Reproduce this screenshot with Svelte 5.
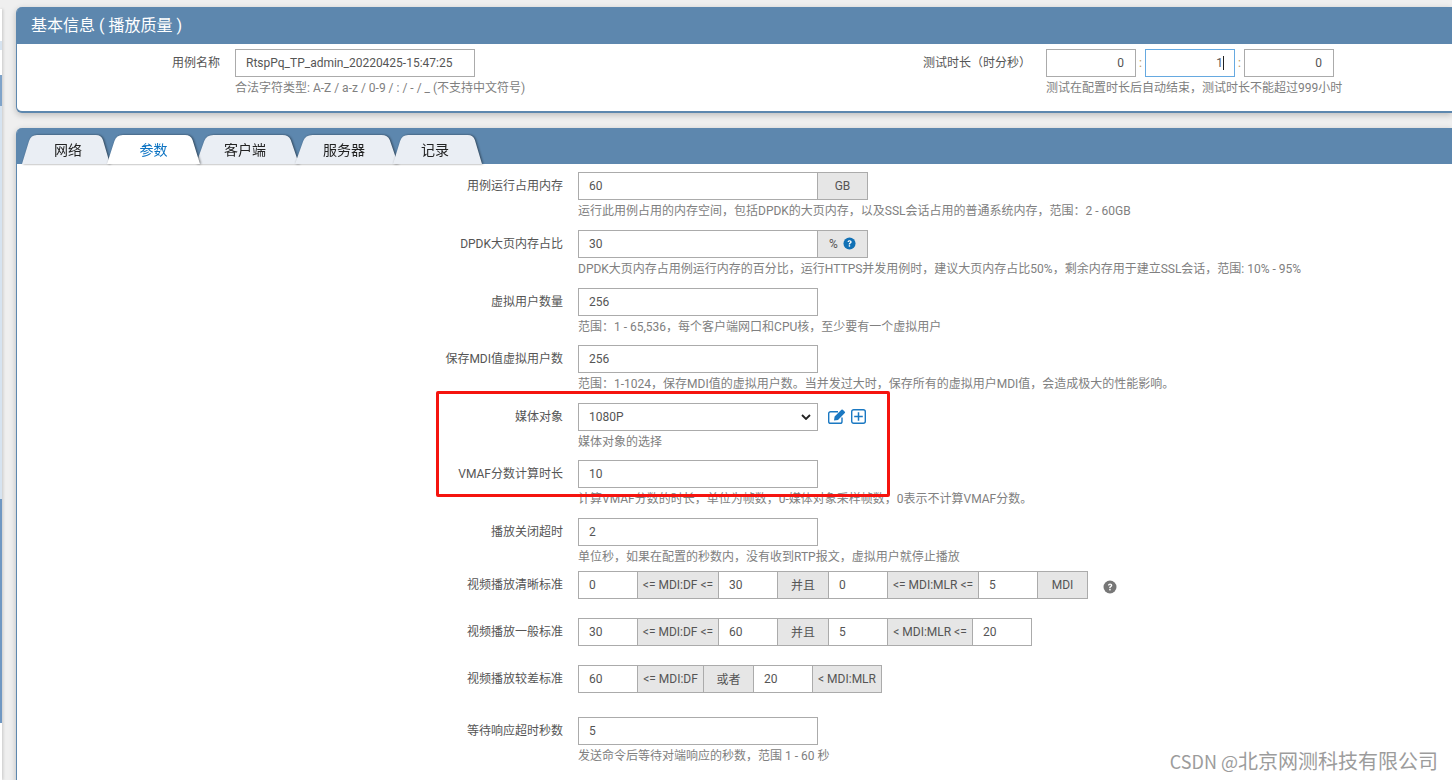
<script>
	const tabs = ['网络', '参数', '客户端', '服务器', '记录'];
	const active = '参数';
</script>

<div class="page">
	<div class="edge"></div>

	<section class="panel basic">
		<h2 class="panel-title">基本信息 ( 播放质量 )</h2>
		<div class="basic-body">
			<div class="basic-col name-col">
				<span class="basic-label">用例名称</span>
				<div>
					<input class="input main" value="RtspPq_TP_admin_20220425-15:47:25" />
					<p class="help">合法字符类型: A-Z / a-z / 0-9 / : / - / _ (不支持中文符号)</p>
				</div>
			</div>
			<div class="basic-col time-col">
				<span class="basic-label">测试时长（时分秒）</span>
				<div>
					<div class="time-inputs">
						<input class="input time" value="0" />
						<span class="colon">:</span>
						<div class="time-focus">
							<input class="input time focus" value="1" />
							<span class="caret"></span>
						</div>
						<span class="colon">:</span>
						<input class="input time" value="0" />
					</div>
					<p class="help">测试在配置时长后自动结束，测试时长不能超过999小时</p>
				</div>
			</div>
		</div>
	</section>

	<section class="panel params">
		<div class="tabbar">
			{#each tabs as tab}
				<div class="tab" class:active={tab === active}>
					<svg class="tab-shape" viewBox="0 0 100 29" preserveAspectRatio="none">
						<path d="M0 29 L8 6 Q10 0 17 0 L84 0 Q90 0 92 5 L100 29 Z" />
					</svg>
					<span class="tab-text">{tab}</span>
				</div>
			{/each}
		</div>

		<div class="form">
			<div class="row">
				<span class="label">用例运行占用内存</span>
				<div>
					<div class="group">
						<input class="input main" value="60" />
						<span class="addon unit">GB</span>
					</div>
					<p class="help">运行此用例占用的内存空间，包括DPDK的大页内存，以及SSL会话占用的普通系统内存，范围：2 - 60GB</p>
				</div>
			</div>

			<div class="row">
				<span class="label">DPDK大页内存占比</span>
				<div>
					<div class="group">
						<input class="input main" value="30" />
						<span class="addon unit">%
							<svg viewBox="0 0 14 14" width="13" height="13">
								<circle cx="7" cy="7" r="6.5" fill="#1271b5" />
								<path d="M4.9 5.4C5 4.1 5.9 3.4 7.1 3.4c1.3 0 2.2.8 2.2 1.9 0 .9-.5 1.3-1.1 1.7-.5.3-.6.5-.6 1H6.2c0-.9.2-1.3.9-1.8.5-.3.7-.5.7-.8 0-.4-.3-.7-.7-.7-.5 0-.7.3-.8.8z" fill="#fff" />
								<rect x="6.2" y="8.8" width="1.5" height="1.6" fill="#fff" />
							</svg>
						</span>
					</div>
					<p class="help">DPDK大页内存占用例运行内存的百分比，运行HTTPS并发用例时，建议大页内存占比50%，剩余内存用于建立SSL会话，范围: 10% - 95%</p>
				</div>
			</div>

			<div class="row">
				<span class="label">虚拟用户数量</span>
				<div>
					<input class="input main" value="256" />
					<p class="help">范围：1 - 65,536，每个客户端网口和CPU核，至少要有一个虚拟用户</p>
				</div>
			</div>

			<div class="row">
				<span class="label">保存MDI值虚拟用户数</span>
				<div>
					<input class="input main" value="256" />
					<p class="help">范围：1-1024，保存MDI值的虚拟用户数。当并发过大时，保存所有的虚拟用户MDI值，会造成极大的性能影响。</p>
				</div>
			</div>

			<div class="row">
				<span class="label">媒体对象</span>
				<div>
					<div class="group">
						<div class="select">
							<span>1080P</span>
							<svg viewBox="0 0 10 6" width="10" height="6" fill="none">
								<path d="M1 1l4 4 4-4" stroke="#222" stroke-width="1.8" />
							</svg>
						</div>
						<svg class="edit" viewBox="0 0 19 15" width="19" height="15" fill="none">
							<path d="M14 8.5V12.4A1.9 1.9 0 0 1 12.1 14.3H2.6A1.9 1.9 0 0 1 .7 12.4V4.6A1.9 1.9 0 0 1 2.6 2.7H10" stroke="#1a78c2" stroke-width="1.4" />
							<path d="M6.6 7.6 13.4.8a1 1 0 0 1 1.4 0l2 1.9a1 1 0 0 1 0 1.4L10 10.9l-4 .7z" fill="#1a78c2" />
						</svg>
						<svg class="plus" viewBox="0 0 15 15" width="15" height="15" fill="none">
							<rect x="0.7" y="0.7" width="13.6" height="13.6" rx="2" stroke="#1a78c2" stroke-width="1.4" />
							<path d="M7.5 3.2v8.6M3.2 7.5h8.6" stroke="#1a78c2" stroke-width="1.5" />
						</svg>
					</div>
					<p class="help">媒体对象的选择</p>
				</div>
			</div>

			<div class="row">
				<span class="label">VMAF分数计算时长</span>
				<div>
					<input class="input main" value="10" />
					<p class="help">计算VMAF分数的时长，单位为帧数，0-媒体对象采样帧数，0表示不计算VMAF分数。</p>
				</div>
			</div>

			<div class="row short">
				<span class="label">播放关闭超时</span>
				<div>
					<input class="input main" value="2" />
					<p class="help">单位秒，如果在配置的秒数内，没有收到RTP报文，虚拟用户就停止播放</p>
				</div>
			</div>

			<div class="row combo">
				<span class="label">视频播放清晰标准</span>
				<div class="group">
					<input class="input cell" value="0" />
					<span class="addon w82">&lt;= MDI:DF &lt;=</span>
					<input class="input cell" value="30" />
					<span class="addon w52">并且</span>
					<input class="input cell" value="0" />
					<span class="addon w92">&lt;= MDI:MLR &lt;=</span>
					<input class="input cell" value="5" />
					<span class="addon w51">MDI</span>
					<svg class="help-grey" viewBox="0 0 14 14" width="14" height="14">
						<circle cx="7" cy="7" r="6.5" fill="#777" />
						<path d="M4.9 5.4C5 4.1 5.9 3.4 7.1 3.4c1.3 0 2.2.8 2.2 1.9 0 .9-.5 1.3-1.1 1.7-.5.3-.6.5-.6 1H6.2c0-.9.2-1.3.9-1.8.5-.3.7-.5.7-.8 0-.4-.3-.7-.7-.7-.5 0-.7.3-.8.8z" fill="#fff" />
						<rect x="6.2" y="8.8" width="1.5" height="1.6" fill="#fff" />
					</svg>
				</div>
			</div>

			<div class="row combo">
				<span class="label">视频播放一般标准</span>
				<div class="group">
					<input class="input cell" value="30" />
					<span class="addon w82">&lt;= MDI:DF &lt;=</span>
					<input class="input cell" value="60" />
					<span class="addon w52">并且</span>
					<input class="input cell" value="5" />
					<span class="addon w86">&lt; MDI:MLR &lt;=</span>
					<input class="input cell" value="20" />
				</div>
			</div>

			<div class="row wide">
				<span class="label">视频播放较差标准</span>
				<div class="group">
					<input class="input cell" value="60" />
					<span class="addon w67">&lt;= MDI:DF</span>
					<span class="addon w51">或者</span>
					<input class="input cell" value="20" />
					<span class="addon w70">&lt; MDI:MLR</span>
				</div>
			</div>

			<div class="row">
				<span class="label">等待响应超时秒数</span>
				<div>
					<input class="input main" value="5" />
					<p class="help">发送命令后等待对端响应的秒数，范围 1 - 60 秒</p>
				</div>
			</div>
		</div>
	</section>

	<div class="highlight"></div>
	<div class="watermark"><span class="wm-latin">CSDN @</span>北京网测科技有限公司</div>
</div>

<style>
	:global(body) {
		background: #efefef;
		overflow: hidden;
	}

	.page {
		position: relative;
		height: 780px;
		overflow: hidden;
		padding: 7px 0 0 16px;
		box-sizing: border-box;
		font-family: Roboto, "Noto Sans CJK SC", sans-serif;
		font-size: 12px;
		color: #555;
	}

	/* sliver of the page's sidebar left of the panels */
	.edge {
		position: absolute;
		left: 0;
		top: 9px;
		width: 2px;
		height: 771px;
		background: linear-gradient(#fff 0 32px, #d6e3f0 32px 41px, #fff 41px 66px, #7fa3c9 66px 97px, #d6e3f0 97px 490px, #6f97c2 490px 714px, #fff 714px);
		box-shadow: 1px 0 3px rgba(0, 0, 0, 0.2);
	}

	.panel {
		background: #fff;
		border-left: 1px solid #5d87ae;
		box-shadow: 0 2px 6px rgba(0, 0, 0, 0.22);
		border-radius: 6px 0 0 6px;
	}

	.basic {
		height: 106px;
		border-bottom: 2px solid #5d87ae;
		box-sizing: border-box;
	}

	.panel-title {
		margin: 0;
		height: 37px;
		padding-left: 14px;
		border-radius: 5px 0 0 0;
		background: #5d87ae;
		color: #fff;
		font-size: 16px;
		font-weight: 400;
		line-height: 37px;
	}

	.basic-body {
		display: flex;
		padding-top: 5px;
	}

	.basic-col {
		display: flex;
		align-items: flex-start;
		flex: none;
	}

	.name-col {
		width: 458px;
	}

	.basic-label {
		flex: none;
		text-align: right;
		line-height: 28px;
		margin-right: 15px;
	}

	.name-col .basic-label {
		width: 203px;
	}

	.time-col .basic-label {
		width: 556px;
	}

	.input {
		display: block;
		height: 28px;
		box-sizing: border-box;
		border: 1px solid #ababab;
		border-radius: 0;
		padding: 0 10px;
		background: #fff;
		color: #555;
		font: inherit;
		outline: none;
	}

	.main {
		width: 240px;
	}

	.time-inputs {
		display: flex;
		align-items: center;
	}

	.time {
		width: 90px;
		text-align: right;
		padding-right: 11px;
	}

	.time-focus {
		position: relative;
	}

	.focus {
		border-color: #66a9e0;
	}

	.caret {
		position: absolute;
		left: 78px;
		top: 7px;
		width: 1px;
		height: 14px;
		background: #222;
	}

	.colon {
		width: 9px;
		text-align: center;
		color: #b79b5c;
	}

	.help {
		margin: 1px 0 0;
		color: #808080;
		line-height: 20px;
		white-space: nowrap;
	}

	.params {
		margin-top: 15px;
		height: 700px;
	}

	.tabbar {
		display: flex;
		height: 36px;
		box-sizing: border-box;
		padding: 7px 0 0 5px;
		background: #5d87ae;
		border-radius: 5px 0 0 0;
	}

	.tab {
		position: relative;
		height: 29px;
		box-sizing: border-box;
		padding-bottom: 2px;
		display: flex;
		align-items: center;
		justify-content: center;
		color: #222;
		font-size: 14px;
		filter: drop-shadow(1px 0 1px rgba(0, 0, 0, 0.5));
	}

	.tab:nth-child(1) {
		width: 88px;
		padding-left: 4px;
	}

	.tab:nth-child(2) {
		width: 93px;
		margin-left: -3px;
	}

	.tab:nth-child(3),
	.tab:nth-child(4) {
		width: 103px;
		margin-left: -4px;
		padding-right: 5px;
	}

	.tab:nth-child(5) {
		width: 89px;
		margin-left: -5px;
		padding-right: 5px;
	}

	.tab-shape {
		position: absolute;
		inset: 0;
		width: 100%;
		height: 100%;
		fill: #eaeef4;
	}

	.tab.active {
		color: #0a72c2;
		z-index: 1;
	}

	.tab.active .tab-shape {
		fill: #fff;
	}

	.tab-text {
		position: relative;
	}

	.form {
		padding-top: 8.4px;
	}

	.row {
		display: grid;
		grid-template-columns: 546px 1fr;
		column-gap: 15px;
		align-items: start;
		min-height: 57.6px;
	}

	.row.short {
		min-height: 53px;
	}

	.row.combo {
		min-height: 47px;
	}

	.row.wide {
		min-height: 52px;
	}

	.label {
		text-align: right;
		line-height: 28px;
	}

	.group {
		display: flex;
		align-items: center;
	}

	.select {
		width: 240px;
		height: 28px;
		box-sizing: border-box;
		border: 1px solid #ababab;
		padding: 0 6px 0 10px;
		display: flex;
		align-items: center;
		justify-content: space-between;
	}

	.addon {
		flex: none;
		height: 28px;
		box-sizing: border-box;
		margin-left: -1px;
		border: 1px solid #ababab;
		background: #e6e6e6;
		display: flex;
		align-items: center;
		justify-content: center;
		gap: 5px;
		white-space: nowrap;
	}

	.unit {
		width: 51px;
	}

	.cell {
		flex: none;
		width: 60px;
	}

	.addon + .cell {
		margin-left: -1px;
	}

	.w51 { width: 51px; }
	.w52 { width: 52px; }
	.w67 { width: 67px; }
	.w70 { width: 70px; }
	.w82 { width: 82px; }
	.w86 { width: 86px; }
	.w92 { width: 92px; }

	.edit {
		margin-left: 10px;
	}

	.plus {
		margin-left: 4px;
	}

	.help-grey {
		margin-left: 15px;
		margin-top: 4px;
	}

	.highlight {
		position: absolute;
		left: 436px;
		top: 391px;
		width: 454px;
		height: 106px;
		box-sizing: border-box;
		border: 3px solid #f5140f;
		border-radius: 2px;
	}

	.watermark {
		position: absolute;
		right: 14px;
		top: 746px;
		color: #9c9c9c;
		font-size: 20px;
		white-space: nowrap;
		font-family: "Noto Sans CJK SC", sans-serif;
	}

	.wm-latin {
		font-size: 18px;
	}
</style>
